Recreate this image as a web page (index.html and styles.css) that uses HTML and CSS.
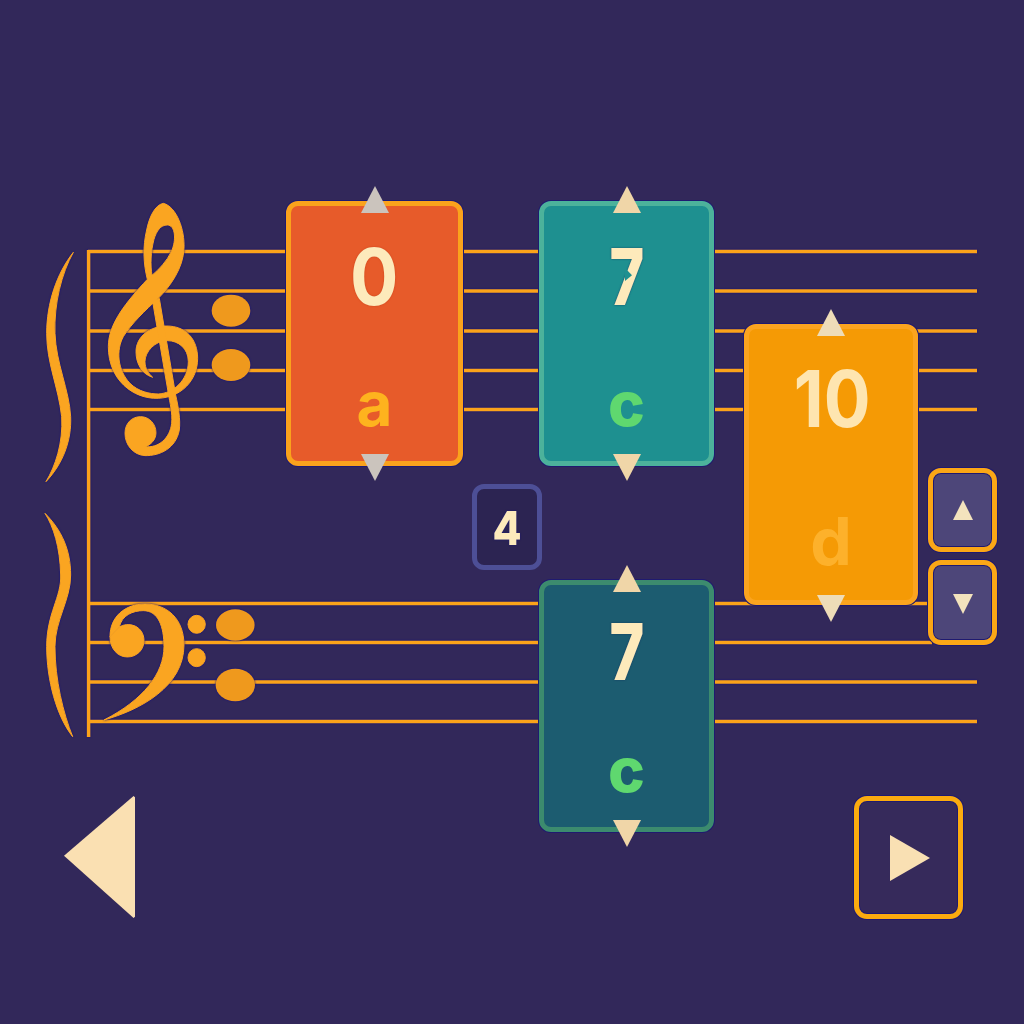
FILE: index.html
```html
<!DOCTYPE html>
<html lang="en">
<head>
    <meta charset="UTF-8">
    <meta name="viewport" content="width=device-width, initial-scale=1.0">
    <title>Staff Blocks</title>
    <link rel="stylesheet" href="styles.css">
</head>
<body>
    <div class="board">
        <svg class="staff" width="1024" height="1024" viewBox="0 0 1024 1024">
            <g class="lines">
                <path d="M88 251.5H977M88 291H977M88 331H977M88 370.5H977M88 409.5H977"/>
                <path d="M88 603.5H932M88 642.5H932M88 682H977M88 721.5H977"/>
                <path d="M88.6 250V737"/>
            </g>
            <g class="clefs">
                <g transform="translate(30 190) scale(0.3333)">
                    <path class="ink" d="M130 187C80 250 50 340 50 430C50 520 85 590 95 680C100 760 75 830 48 875C100 820 125 750 122 680C118 600 78 520 75 430C72 340 95 250 130 187Z"/>
                    <path class="ink" fill-rule="evenodd" d="M400 40C440 50 465 120 462 175C460 235 420 290 385 325C345 362 305 400 280 440C258 480 262 540 300 580C325 605 360 612 385 612C430 610 475 570 475 515C475 475 445 452 412 452C375 452 345 485 345 515C345 535 355 550 368 562C335 552 318 520 318 485C318 440 360 408 410 408C470 408 503 450 503 505C503 570 455 622 385 625C310 628 235 570 235 470C235 400 290 335 352 268C340 220 338 170 350 120C358 80 375 45 400 40ZM412 105C392 105 380 122 372 148C362 185 361 225 366 256C388 237 410 214 424 185C440 150 436 105 412 105Z"/>
                    <path class="ink" d="M368 335L388 325L437 615C445 650 452 690 448 720C438 775 390 798 345 797C310 795 285 765 285 730C285 700 305 680 332 680C358 680 378 702 378 728C378 750 362 765 345 770C385 775 420 745 425 700C428 670 420 640 415 610Z"/>
                    <ellipse class="note" cx="603" cy="362" rx="58" ry="48"/>
                    <ellipse class="note" cx="603" cy="525" rx="58" ry="48"/>
                </g>
                <g transform="translate(30 500) scale(0.3333)">
                    <path class="ink" d="M45 40C95 90 122 150 122 225C122 300 75 360 75 440C75 540 100 640 128 710C80 650 50 540 50 440C50 340 95 290 92 225C90 140 70 80 45 40Z"/>
                    <path class="ink" d="M222 660C330 630 462 560 462 435C462 355 410 312 345 312C285 312 240 350 240 410L268 382C275 345 310 332 340 332C385 332 402 380 402 440C402 520 340 600 222 660Z"/>
                    <path class="ink" d="M268 382C280 372 300 372 315 378C332 386 342 402 342 422C342 450 320 471 292 471C262 471 240 445 240 410Z"/>
                    <ellipse class="ink" cx="500" cy="373" rx="26" ry="27"/>
                    <ellipse class="ink" cx="500" cy="473" rx="26" ry="27"/>
                    <ellipse class="note" cx="616" cy="375" rx="58" ry="47"/>
                    <ellipse class="note" cx="616" cy="555" rx="59" ry="49"/>
                </g>
            </g>
        </svg>

        <div class="card card-a">
            <span class="tri up"></span>
            <span class="num">0</span>
            <span class="letter">a</span>
            <span class="tri down"></span>
        </div>

        <div class="card card-b">
            <span class="tri up"></span>
            <span class="num">7</span>
            <span class="nick"></span>
            <span class="letter">c</span>
            <span class="tri down"></span>
        </div>

        <div class="card card-c">
            <span class="tri up"></span>
            <span class="num">10</span>
            <span class="letter">d</span>
            <span class="tri down"></span>
        </div>

        <div class="card card-d">
            <span class="tri up"></span>
            <span class="num">7</span>
            <span class="letter">c</span>
            <span class="tri down"></span>
        </div>

        <div class="count"><span class="count-num">4</span></div>

        <button class="step step-up"><span class="mini up"></span></button>
        <button class="step step-down"><span class="mini down"></span></button>

        <button class="back"></button>
        <button class="play"><span class="play-tri"></span></button>
    </div>
</body>
</html>
```

FILE: styles.css
```css
* {
    box-sizing: border-box;
}
body {
    margin: 0;
    background-color: #32285a;
    font-family: Inter, "Liberation Sans", sans-serif;
}
.board {
    position: relative;
    width: 1024px;
    height: 1024px;
    overflow: hidden;
}
.staff {
    position: absolute;
    left: 0;
    top: 0;
}
.lines {
    fill: none;
    stroke: #fba31a;
    stroke-width: 3.5;
    filter: drop-shadow(0 0 0.8px #141080);
}
.clefs {
    filter: drop-shadow(0 0 0.8px #141080);
}
.ink {
    fill: #faa521;
    stroke: #faa521;
    stroke-width: 3;
}
.note {
    fill: #ef991d;
}

/* blocks sit on the staff */
.card {
    position: absolute;
    display: flex;
    flex-direction: column;
    align-items: center;
    justify-content: space-between;
    padding: 40px 0 32px;
    border: 5px solid;
    border-radius: 12px;
    box-shadow: 0 0 0 1px #1f1a70;
}
.card-a {
    left: 286px;
    top: 201px;
    width: 177px;
    height: 265px;
    background-color: #e75b2a;
    border-color: #faa21c;
}
.card-b {
    left: 539px;
    top: 201px;
    width: 175px;
    height: 265px;
    background-color: #1e9090;
    border-color: #4cb29b;
}
.card-c {
    left: 744px;
    top: 324px;
    width: 174px;
    height: 281px;
    padding: 39px 0 34px;
    background-color: #f59a05;
    border-color: #fba41f;
}
.card-d {
    left: 539px;
    top: 580px;
    width: 175px;
    height: 252px;
    padding-top: 36px;
    background-color: #1c5c70;
    border-color: #3c8b6e;
}
.num {
    font-size: 78px;
    font-weight: 700;
    line-height: 62px;
    color: #fdeabb;
    transform: scaleX(0.92);
    text-shadow: 0 0 2px #c8401a;
}
.card-b .num, .card-d .num {
    font-weight: 800;
    transform: scaleX(0.76);
    text-shadow: 0 0 2px #14305f;
}
.card-c .num {
    margin-left: 3px;
    color: #fee5b0;
    transform: scaleX(0.89);
    text-shadow: none;
}
.nick {
    position: absolute;
    left: 81px;
    top: 62px;
    width: 7px;
    height: 13px;
    background-color: #1e9090;
    clip-path: polygon(0 0, 100% 55%, 0 100%);
}
.letter {
    font-size: 62px;
    font-weight: 700;
    line-height: 50px;
    color: #feb31e;
}
.card-b .letter, .card-d .letter {
    font-weight: 800;
    color: #5fd86f;
}
.card-c .letter {
    font-size: 66px;
    color: #fdb12b;
}

.tri {
    position: absolute;
    left: 50%;
    width: 0;
    height: 0;
    margin-left: -14px;
    border-left: 14px solid transparent;
    border-right: 14px solid transparent;
    color: #f0d6a8;
}
.tri.up {
    top: -20px;
    border-bottom: 27px solid currentColor;
}
.tri.down {
    bottom: -20px;
    border-top: 27px solid currentColor;
}
.card-a .tri {
    color: #cbc4bd;
}
.card-c .tri {
    color: #eedcb8;
}
.card-c .tri.down {
    bottom: -22px;
}

.count {
    position: absolute;
    left: 472px;
    top: 484px;
    width: 70px;
    height: 86px;
    display: flex;
    align-items: center;
    justify-content: center;
    background-color: #2c2452;
    border: 5px solid #4d4f96;
    border-radius: 12px;
}
.count-num {
    font-size: 47px;
    font-weight: 800;
    color: #fdeabb;
    transform: scaleX(0.9);
    text-shadow: 0 0 2px #16147c;
}

button {
    padding: 0;
    cursor: pointer;
}
.step {
    position: absolute;
    left: 928px;
    width: 69px;
    display: flex;
    align-items: center;
    justify-content: center;
    background-color: #4d4679;
    border: 5px solid #fba716;
    border-radius: 13px;
    box-shadow: 0 0 0 1px #1f1a70, inset 0 0 0 1px #1f1a70;
}
.step-up {
    top: 468px;
    height: 84px;
}
.step-down {
    top: 560px;
    height: 85px;
}
.mini {
    width: 0;
    height: 0;
    border-left: 10px solid transparent;
    border-right: 10px solid transparent;
}
.mini.up {
    border-bottom: 20px solid #f3e3bd;
}
.mini.down {
    margin-top: 3px;
    border-top: 20px solid #f3e3bd;
}

.back {
    position: absolute;
    left: 64px;
    top: 796px;
    width: 71px;
    height: 122px;
    border: none;
    background-color: #fae0b2;
    clip-path: polygon(0 49%, 98% 0, 100% 1%, 100% 99%, 98% 100%);
}
.play {
    position: absolute;
    left: 854px;
    top: 796px;
    width: 109px;
    height: 123px;
    display: flex;
    align-items: center;
    justify-content: center;
    background-color: #362a5b;
    border: 5px solid #fbab0f;
    border-radius: 13px;
    box-shadow: 0 0 0 1px #1f1a70, inset 0 0 0 1px #1f1a70;
}
.play-tri {
    width: 0;
    height: 0;
    margin-left: 2px;
    border-top: 23px solid transparent;
    border-bottom: 23px solid transparent;
    border-left: 40px solid #f9e0b3;
}
```
